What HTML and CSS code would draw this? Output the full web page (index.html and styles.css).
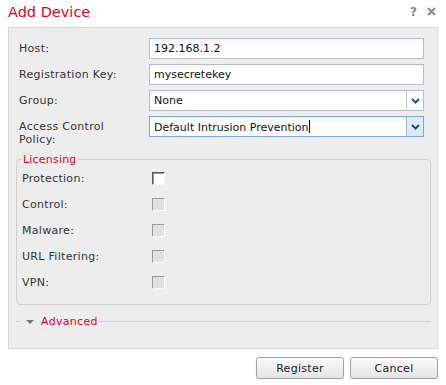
FILE: index.html
```html
<!DOCTYPE html>
<html lang="en">
<head>
    <meta charset="UTF-8">
    <title>Add Device</title>
    <link rel="stylesheet" href="styles.css">
</head>
<body>
    <div class="dialog">
        <header class="dialog-head">
            <h1 class="dialog-title">Add Device</h1>
            <div class="head-tools">
                <span class="tool">?</span>
                <svg class="close" width="9" height="9" viewBox="0 0 9 9"><path d="M1 1 L8 8 M8 1 L1 8" stroke="#8a8a8a" stroke-width="2"/></svg>
            </div>
        </header>

        <div class="panel">
            <div class="row">
                <label class="label">Host:</label>
                <div class="field"><span class="value">192.168.1.2</span></div>
            </div>
            <div class="row">
                <label class="label">Registration Key:</label>
                <div class="field"><span class="value">mysecretekey</span></div>
            </div>
            <div class="row">
                <label class="label">Group:</label>
                <div class="field select">
                    <span class="value">None</span>
                    <span class="arrow"><svg width="9" height="6" viewBox="0 0 9 6"><path d="M1 1 L4.5 4.5 L8 1" fill="none" stroke="#2f4a7a" stroke-width="2"/></svg></span>
                </div>
            </div>
            <div class="row">
                <label class="label">Access Control Policy:</label>
                <div class="field select focus">
                    <span class="value">Default Intrusion Prevention<span class="caret"></span></span>
                    <span class="arrow"><svg width="9" height="6" viewBox="0 0 9 6"><path d="M1 1 L4.5 4.5 L8 1" fill="none" stroke="#2f4a7a" stroke-width="2"/></svg></span>
                </div>
            </div>

            <fieldset class="licensing">
                <legend>Licensing</legend>
                <div class="check-row"><span class="label">Protection:</span><span class="check"></span></div>
                <div class="check-row"><span class="label">Control:</span><span class="check disabled"></span></div>
                <div class="check-row"><span class="label">Malware:</span><span class="check disabled"></span></div>
                <div class="check-row"><span class="label">URL Filtering:</span><span class="check disabled"></span></div>
                <div class="check-row"><span class="label">VPN:</span><span class="check disabled"></span></div>
            </fieldset>

            <div class="advanced">
                <span class="adv-line short"></span>
                <span class="adv-tri"></span>
                <span class="adv-text">Advanced</span>
                <span class="adv-line"></span>
            </div>
        </div>

        <footer class="actions">
            <button class="btn">Register</button>
            <button class="btn">Cancel</button>
        </footer>
    </div>
</body>
</html>
```

FILE: styles.css
```css
/* Reset */
* {
    margin: 0;
    padding: 0;
    box-sizing: border-box;
}

body {
    font-family: 'DejaVu Sans', Verdana, sans-serif;
    font-size: 11px;
    color: #333;
    background: #fff;
}

.dialog {
    width: 446px;
    padding: 0 8px;
}

/* Title bar */
.dialog-head {
    display: flex;
    justify-content: space-between;
    align-items: center;
    height: 27px;
}

.dialog-title {
    font-size: 14.5px;
    font-weight: normal;
    color: #e2002b;
    margin-top: -4px;
}

.head-tools {
    display: flex;
    align-items: center;
    gap: 10px;
    margin-top: -4px;
    padding-right: 2px;
}

.tool {
    color: #888;
    font-weight: bold;
    font-size: 12px;
}

/* Main grey panel */
.panel {
    background: #ededed;
    border: 1px solid #d6d6d6;
    padding: 10px 13px 0 10px;
    height: 322px;
}

.row {
    display: flex;
    align-items: flex-start;
    min-height: 26px;
}

.label {
    width: 130px;
    padding-right: 24px;
    line-height: 13px;
    padding-top: 4px;
    letter-spacing: 0.3px;
    color: #333;
}

.field {
    flex: 1;
    height: 21px;
    background: linear-gradient(#f4f4f4, #fff 5px);
    border: 1px solid #b9bcc6;
    display: flex;
    align-items: center;
}

.value {
    padding-left: 4px;
    color: #111;
    flex: 1;
}

.field.focus {
    border-color: #7fa5d6;
}

.arrow {
    width: 17px;
    height: 100%;
    border-left: 1px solid #c6c8d0;
    display: flex;
    align-items: center;
    justify-content: center;
}

.focus .arrow {
    background: #dce9f8;
    border-left-color: #9bbbe3;
}

.caret {
    display: inline-block;
    width: 1px;
    height: 13px;
    background: #000;
    vertical-align: -2px;
}

/* Licensing group */
.licensing {
    margin: 8px -7px 0 -3px;
    border: 1px solid #cfcfcf;
    border-radius: 4px;
    padding: 0 5px 9px 5px;
}

.licensing legend {
    color: #e2002b;
    line-height: 11px;
    padding: 0 1px;
    letter-spacing: 0.2px;
}

.check-row {
    display: flex;
    align-items: center;
    height: 26px;
}

.check-row .label {
    padding-top: 0;
}

.check {
    width: 13px;
    height: 13px;
    background: #fff;
    border: 1px solid;
    border-color: #555 #fff #fff #555;
    box-shadow: inset 1px 1px 0 #999;
}

.check.disabled {
    background: #e0e0de;
    border-color: #999 #fff #fff #999;
    box-shadow: none;
}

/* Advanced collapsible header */
.advanced {
    display: flex;
    align-items: center;
    margin: 10px -7px 0 -3px;
    color: #e2002b;
    letter-spacing: 0.3px;
}

.adv-line {
    flex: 1;
    height: 1px;
    background: #cfcfcf;
}

.adv-line.short {
    flex: none;
    width: 4px;
    margin-right: 6px;
}

.adv-tri {
    width: 0;
    height: 0;
    border-left: 4px solid transparent;
    border-right: 4px solid transparent;
    border-top: 4px solid #777;
    margin-right: 7px;
}

.adv-text {
    padding-right: 1px;
}

/* Buttons */
.actions {
    display: flex;
    justify-content: flex-end;
    gap: 6px;
    padding-top: 8px;
}

.btn {
    width: 88px;
    height: 22px;
    font-family: 'DejaVu Sans', Verdana, sans-serif;
    font-size: 11px;
    letter-spacing: 0.3px;
    color: #222;
    border: 1px solid #a0a0a0;
    border-radius: 3px;
    background: linear-gradient(#fafafa, #e4e4e4);
    box-shadow: 0 1px 1px rgba(0, 0, 0, 0.15);
}
```
